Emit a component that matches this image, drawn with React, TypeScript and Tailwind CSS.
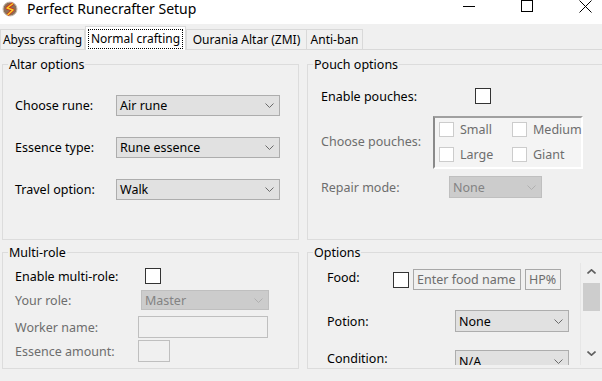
import React from "react";

type Props = { className?: string; disabled?: boolean };

function Chevron({ disabled }: { disabled?: boolean }) {
  return (
    <svg width="9" height="5" viewBox="0 0 9 5" className="shrink-0">
      <polyline
        points="0.5,0.5 4.5,4.5 8.5,0.5"
        fill="none"
        stroke={disabled ? "#b0b0b0" : "#6a6a6a"}
        strokeWidth="1"
      />
    </svg>
  );
}

function Combo({ value, className, disabled }: Props & { value: string }) {
  return (
    <div
      className={`flex items-center justify-between border pl-[3px] pr-[5px] ${
        disabled ? "border-[#bfbfbf] bg-[#cccccc] text-[#838383]" : "border-[#adadad] bg-[#e1e1e1] text-black"
      } ${className ?? ""}`}
    >
      <span>{value}</span>
      <Chevron disabled={disabled} />
    </div>
  );
}

function Check({ className, disabled }: Props) {
  return (
    <span
      className={`block shrink-0 border bg-white ${
        disabled ? "w-[15px] h-[15px] border-[#cccccc]" : "w-[16px] h-[16px] border-[#333333]"
      } ${className ?? ""}`}
    />
  );
}

function Group({ title, className, children }: { title: string; className?: string; children: React.ReactNode }) {
  return (
    <fieldset className={`min-w-0 border border-[#dcdcdc] ${className ?? ""}`}>
      <legend className="ml-[5px] px-[1px] leading-[15px]">{title}</legend>
      {children}
    </fieldset>
  );
}

function TitleBar() {
  return (
    <div className="flex h-[24px] items-start bg-white">
      {/* app icon */}
      <svg width="16" height="16" viewBox="0 0 16 16" className="ml-[2px] mt-[1px] shrink-0">
        <circle cx="8" cy="8" r="7" fill="#8c6f57" />
        <circle cx="8" cy="8" r="7" fill="none" stroke="#c9bcb0" strokeWidth="1" />
        <path d="M11 2.5 L5 7 L11 9 L5.5 14" fill="none" stroke="#d42a1a" strokeWidth="3" strokeLinejoin="round" />
        <path d="M11 2.5 L5 7 L11 9 L5.5 14" fill="none" stroke="#f5d12a" strokeWidth="1.5" strokeLinejoin="round" />
      </svg>
      <span className="ml-[9px] text-[14px] leading-[17px] text-black">Perfect Runecrafter Setup</span>
      <div className="ml-auto -mr-[12px] flex">
        <div className="flex w-[58px] justify-center pt-[6px]">
          <span className="block h-px w-[12px] bg-black" />
        </div>
        <div className="flex w-[58px] justify-center">
          <span className="block h-[12px] w-[12px] border border-black" />
        </div>
        <div className="flex w-[58px] justify-center">
          <svg width="13" height="13" viewBox="0 0 13 13">
            <path d="M0.5 0.5 L12.5 12.5 M12.5 0.5 L0.5 12.5" stroke="#000" strokeWidth="1" />
          </svg>
        </div>
      </div>
    </div>
  );
}

function Tabs() {
  const tab = "flex h-[21px] items-center justify-center border border-[#d9d9d9] bg-[#f0f0f0]";
  return (
    <div className="flex h-[26px] items-end text-[12px]">
      <div className={`${tab} w-[85px]`}>Abyss crafting</div>
      <div className="flex h-[24px] w-[101px] items-center justify-center border border-b-0 border-[#d9d9d9] bg-white px-[2px]">
        <span className="flex h-[20px] w-full items-center justify-center border border-dotted border-black">
          Normal crafting
        </span>
      </div>
      <div className={`${tab} w-[121px]`}>Ourania Altar (ZMI)</div>
      <div className={`${tab} -ml-px w-[57px]`}>Anti-ban</div>
      <div className="h-px flex-1 bg-[#d9d9d9]" />
    </div>
  );
}

export default function App() {
  const altar = [
    { label: "Choose rune:", value: "Air rune" },
    { label: "Essence type:", value: "Rune essence" },
    { label: "Travel option:", value: "Walk" },
  ];

  return (
    <div className="h-[381px] w-[602px] overflow-hidden bg-[#f0f0f0] font-['Noto_Sans',sans-serif] text-[12.5px] leading-[15px] text-black">
      <TitleBar />
      <Tabs />

      <div className="grid grid-cols-[297px_297px] grid-rows-[183px_124px] gap-x-[8px] gap-y-[5px] pl-[2px] pt-[7px]">
        {/* Altar options */}
        <Group title="Altar options" className="h-[183px]">
          <div className="flex flex-col gap-[21px] pl-[12px] pt-[23px]">
            {altar.map((row) => (
              <div key={row.label} className="flex h-[21px] items-center">
                <span className="w-[101px]">{row.label}</span>
                <Combo value={row.value} className="h-[21px] w-[164px]" />
              </div>
            ))}
          </div>
        </Group>

        {/* Pouch options */}
        <Group title="Pouch options" className="h-[183px]">
          <div className="flex flex-col pl-[13px]">
            <div className="mt-[16px] flex h-[16px] items-center">
              <span className="w-[154px]">Enable pouches:</span>
              <Check />
            </div>
            <div className="mt-[12px] flex items-center">
              <span className="w-[112px] -mt-[3px] text-[#6d6d6d]">Choose pouches:</span>
              <div className="grid h-[53px] w-[150px] grid-cols-[73px_1fr] content-start gap-y-[10px] border-2 border-b-white border-l-[#8a8a8a] border-r-white border-t-[#a0a0a0] bg-[#f4f4f4] p-[4px] text-[#6d6d6d]">
                {["Small", "Medium", "Large", "Giant"].map((p) => (
                  <div key={p} className="flex h-[15px] items-center gap-[6px]">
                    <Check disabled />
                    <span>{p}</span>
                  </div>
                ))}
              </div>
            </div>
            <div className="mt-[7px] flex h-[22px] items-center">
              <span className="w-[128px] text-[#6d6d6d]">Repair mode:</span>
              <Combo value="None" disabled className="h-[22px] w-[93px]" />
            </div>
          </div>
        </Group>

        {/* Multi-role */}
        <Group title="Multi-role" className="h-[124px]">
          <div className="flex flex-col pl-[12px]">
            <div className="mt-[8px] flex h-[16px] items-center">
              <span className="w-[130px]">Enable multi-role:</span>
              <Check />
            </div>
            <div className="mt-[6px] flex h-[20px] items-center text-[#6d6d6d]">
              <span className="w-[126px]">Your role:</span>
              <Combo value="Master" disabled className="h-[20px] w-[128px]" />
            </div>
            <div className="mt-[6px] flex h-[22px] items-center text-[#6d6d6d]">
              <span className="w-[123px]">Worker name:</span>
              <div className="h-[22px] w-[130px] border border-[#bfbfbf]" />
            </div>
            <div className="mt-[2px] flex h-[22px] items-center text-[#6d6d6d]">
              <span className="w-[123px]">Essence amount:</span>
              <div className="h-[22px] w-[32px] border border-[#bfbfbf]" />
            </div>
          </div>
        </Group>

        {/* Options */}
        <Group title="Options" className="h-[124px]">
          <div className="mt-[3px] flex h-[102px]">
            <div className="min-w-0 flex-1 overflow-hidden pl-[19px]">
              <div className="mt-[6px] flex h-[21px] items-center">
                <span className="w-[66px] -mt-[4px]">Food:</span>
                <Check />
                <div className="ml-[4px] flex h-[21px] w-[108px] items-center border border-[#a8a8a8] px-[3px] text-[#6d6d6d]">
                  Enter food name
                </div>
                <div className="ml-[4px] flex h-[21px] w-[36px] items-center border border-[#a8a8a8] px-[3px] text-[#6d6d6d]">
                  HP%
                </div>
              </div>
              <div className="mt-[20px] flex h-[22px] items-center">
                <span className="w-[128px]">Potion:</span>
                <Combo value="None" className="h-[22px] w-[114px]" />
              </div>
              <div className="mt-[18px] flex h-[22px] items-center">
                <span className="w-[128px] -mt-[5px]">Condition:</span>
                <Combo value="N/A" className="h-[22px] w-[114px]" />
              </div>
            </div>

            {/* scrollbar */}
            <div className="mr-[1px] flex w-[22px] shrink-0 flex-col border-l border-[#e6e6e6]">
              <div className="flex h-[20px] items-start justify-center pt-[6px]">
                <svg width="9" height="5" viewBox="0 0 9 5">
                  <polyline points="0.5,4.5 4.5,0.8 8.5,4.5" fill="none" stroke="#606060" strokeWidth="1.6" />
                </svg>
              </div>
              <div className="mx-[2px] h-[28px] bg-[#cdcdcd]" />
              <div className="flex-1" />
              <div className="flex h-[20px] items-start justify-center pt-[6px]">
                <svg width="9" height="5" viewBox="0 0 9 5">
                  <polyline points="0.5,0.5 4.5,4.2 8.5,0.5" fill="none" stroke="#606060" strokeWidth="1.6" />
                </svg>
              </div>
            </div>
          </div>
        </Group>
      </div>
    </div>
  );
}
